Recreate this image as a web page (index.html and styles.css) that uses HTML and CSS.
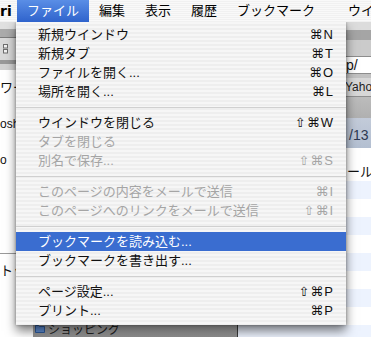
FILE: index.html
```html
<!DOCTYPE html>
<html lang="ja">
<head>
    <meta charset="UTF-8">
    <title>Safari - ファイル</title>
    <link rel="stylesheet" href="styles.css">
</head>
<body>
    <!-- Menu bar -->
    <div class="menubar">
        <span class="app">ri</span>
        <span class="on">ファイル</span>
        <span>編集</span>
        <span>表示</span>
        <span>履歴</span>
        <span>ブックマーク</span>
        <span class="last">ウイン</span>
    </div>

    <div class="desk">
        <!-- window behind, left -->
        <div class="win-a">
            <div class="tb-a">
                <div class="a1"></div>
                <div class="a2"></div>
                <div class="a3">
                    <svg width="6" height="10" viewBox="0 0 6 10">
                        <rect x="0.5" y="0.5" width="4" height="3.5" fill="#f2f2f2" stroke="#6e6e6e"/>
                        <rect x="0.5" y="5.5" width="4" height="3.5" fill="#f2f2f2" stroke="#6e6e6e"/>
                    </svg>
                </div>
                <div class="a4"></div>
                <div class="a5"></div>
            </div>
            <ul class="list-a">
                <li class="jp">ワー</li>
                <li class="mac">osh</li>
                <li class="vid">o</li>
                <li class="top">トッ</li>
            </ul>
        </div>

        <!-- Safari bookmarks window -->
        <div class="win-b">
            <div class="b1"></div>
            <div class="b2"></div>
            <div class="b3"></div>
            <div class="url-row">
                <div class="url">p/</div>
            </div>
            <div class="b4"></div>
            <div class="bmbar">
                <span>Yahoo!</span>
            </div>
            <div class="b5"></div>
            <div class="body-b">
                <div class="side">
                    <div class="sel">
                        <svg width="10" height="9" viewBox="0 0 10 9">
                            <path d="M0.5 1.5h3l1 1h5v6h-9z" fill="#5f8fd6" stroke="#2f5d9e"/>
                        </svg>
                        <span>ショッピング</span>
                    </div>
                </div>
                <div class="main">
                    <div class="head">/13</div>
                    <div class="lbl"></div>
                    <div class="row">ール .</div>
                    <div class="row"></div>
                    <div class="row"></div>
                    <div class="row"></div>
                    <div class="row"></div>
                    <div class="row"></div>
                    <div class="row"></div>
                    <div class="row"></div>
                    <div class="row"></div>
                    <div class="row"></div>
                </div>
            </div>
        </div>

        <!-- File menu -->
        <div class="menu">
            <div class="item"><span>新規ウインドウ</span><span class="key">⌘N</span></div>
            <div class="item"><span>新規タブ</span><span class="key">⌘T</span></div>
            <div class="item"><span>ファイルを開く...</span><span class="key">⌘O</span></div>
            <div class="item"><span>場所を開く...</span><span class="key">⌘L</span></div>
            <div class="sep"></div>
            <div class="item"><span>ウインドウを閉じる</span><span class="key">⇧⌘W</span></div>
            <div class="item off"><span>タブを閉じる</span><span class="key"></span></div>
            <div class="item off"><span>別名で保存...</span><span class="key">⇧⌘S</span></div>
            <div class="sep"></div>
            <div class="item off"><span>このページの内容をメールで送信</span><span class="key">⌘I</span></div>
            <div class="item off"><span>このページへのリンクをメールで送信</span><span class="key">⇧⌘I</span></div>
            <div class="sep"></div>
            <div class="item hi"><span>ブックマークを読み込む...</span><span class="key"></span></div>
            <div class="item"><span>ブックマークを書き出す...</span><span class="key"></span></div>
            <div class="sep"></div>
            <div class="item"><span>ページ設定...</span><span class="key">⇧⌘P</span></div>
            <div class="item"><span>プリント...</span><span class="key">⌘P</span></div>
        </div>
    </div>
</body>
</html>
```

FILE: styles.css
```css
/* General */
* {
    box-sizing: border-box;
}

body {
    margin: 0;
    width: 371px;
    height: 337px;
    overflow: hidden;
    background: #fff;
    font-family: "Liberation Sans", "Noto Sans CJK JP", sans-serif;
    font-size: 13px;
    color: #000;
}

ul {
    margin: 0;
    padding: 0;
    list-style: none;
}

/* Menu bar */
.menubar {
    position: relative;
    z-index: 2;
    height: 22px;
    display: flex;
    white-space: nowrap;
    overflow: hidden;
    background: repeating-linear-gradient(#f9f9f9 0 1px, #f1f1f1 1px 2px);
}

.menubar span {
    flex: none;
    padding: 0 10px;
    line-height: 22px;
}

.menubar .app {
    width: 17px;
    padding: 0;
    font-family: "DejaVu Sans", sans-serif;
    font-weight: bold;
    font-size: 14px;
}

.menubar .on {
    background: linear-gradient(#5a8ee6, #2f63cc);
    color: #fff;
}

.menubar .last {
    margin-left: 13px;
}

/* Desktop under the menu */
.desk {
    position: relative;
    height: 315px;
    display: flex;
}

/* Left window */
.win-a {
    width: 33px;
    flex: none;
    overflow: hidden;
    white-space: nowrap;
}

.a1 { height: 7px; background: #e0e0e0; }
.a2 { height: 9px; background: #ababab; border-bottom: 1px solid #7c7c7c; }
.a3 { height: 22px; background: #d9d9d9; padding: 6px 0 0 3px; }
.a3 svg { display: block; }
.a4 { height: 4px; background: #999; }
.a5 { height: 6px; background: #d2d2d2; }

.list-a li {
    height: 36px;
    line-height: 36px;
    color: #111;
}

.list-a .mac,
.list-a .vid {
    font-size: 12px;
}

.list-a .top {
    margin-top: 75px;
    height: 34px;
    line-height: 34px;
    border-top: 1px solid #9a9a9a;
}

/* Bookmarks window */
.win-b {
    flex: 1;
    min-width: 0;
    display: flex;
    flex-direction: column;
    overflow: hidden;
    white-space: nowrap;
}

.b1 { height: 8px; background: #dcdcdc; flex: none; }
.b2 { height: 10px; background: #a5a5a5; flex: none; }
.b3 { height: 16px; background: #cbcbcb; flex: none; }

.url-row {
    height: 18px;
    flex: none;
    background: #cbcbcb;
    padding-left: 155px;
}

.url {
    height: 18px;
    line-height: 17px;
    padding-left: 157px;
    background: #fff;
    border: 1px solid #8d8d8d;
    border-right: none;
    font-size: 14px;
    color: #111;
}

.b4 { height: 4px; background: #c1c1c1; flex: none; }

.bmbar {
    height: 18px;
    flex: none;
    display: flex;
    padding-left: 312px;
    background: #d7d7d7;
    font-size: 12px;
    line-height: 18px;
    color: #222;
}

.b5 {
    height: 22px;
    flex: none;
    background: linear-gradient(#bcbcbc, #b0b0b0);
    border-top: 1px solid #8f8f8f;
}

.body-b {
    flex: 1;
    display: flex;
    min-height: 0;
}

.side {
    width: 205px;
    flex: none;
    display: flex;
    flex-direction: column;
    justify-content: flex-end;
    border-right: 1px solid #3a3a3a;
    font-size: 12px;
    color: #333;
}

.side .sel {
    height: 18px;
    display: flex;
    align-items: center;
    gap: 3px;
    padding-left: 2px;
    background: linear-gradient(#c6c6c6, #8e8e8e);
    color: #222;
}

.main {
    flex: 1;
    min-width: 0;
    overflow: hidden;
}

.head {
    height: 30px;
    line-height: 34px;
    padding-left: 111px;
    background: linear-gradient(#c3cbd9, #b3bfd1);
    font-size: 14px;
    color: #2f3a52;
}

.lbl {
    height: 15px;
}

.row {
    height: 18px;
    line-height: 18px;
    padding-left: 109px;
    color: #111;
}

.row:nth-child(even) {
    background: #edf3fe;
}

/* File menu */
.menu {
    position: absolute;
    top: 0;
    left: 16px;
    z-index: 1;
    width: 330px;
    padding: 3px 0 5px;
    background: repeating-linear-gradient(#f6f6f6 0 2px, #eeeeee 2px 4px);
    box-shadow: 0 6px 10px rgba(0, 0, 0, 0.5), 0 0 3px rgba(0, 0, 0, 0.35);
    font-size: 13px;
}

.item {
    height: 19px;
    line-height: 19px;
    display: flex;
    justify-content: space-between;
    padding: 0 12px 0 22px;
    color: #111;
}

.item.off {
    color: #a5a5a5;
}

.item.hi {
    background: #3a6dd0;
    color: #fff;
}

.key {
    font-family: "Liberation Sans", "DejaVu Sans", sans-serif;
    font-size: 13px;
    letter-spacing: 1px;
}

.sep {
    margin: 6px 0 5px;
    border-top: 1px solid #d0d0d0;
}
```
